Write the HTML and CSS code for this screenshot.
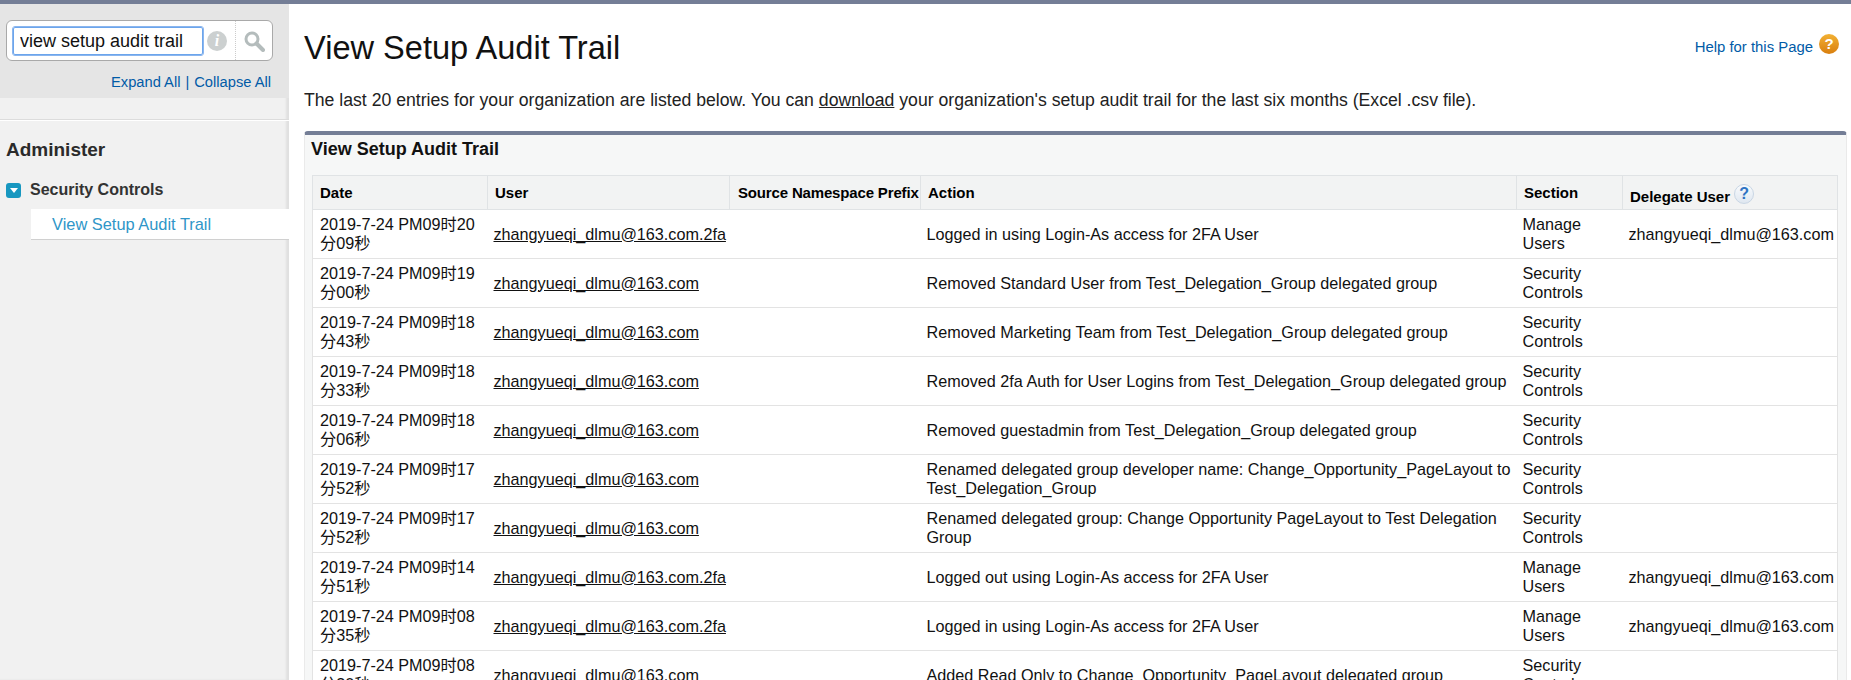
FILE: index.html
```html
<!DOCTYPE html>
<html lang="en">
<head>
    <meta charset="UTF-8">
    <title>View Setup Audit Trail</title>
    <link rel="stylesheet" href="styles.css">
</head>
<body>
    <div class="top-bar"></div>
    <div class="layout">
        <div class="sidebar">
            <div class="search-area">
                <div class="search-box">
                    <input class="search-input" type="text" value="view setup audit trail">
                    <span class="info-icon">i</span>
                    <span class="search-btn">
                        <svg width="22" height="22" viewBox="0 0 22 22"><circle cx="9" cy="9" r="6" fill="none" stroke="#b4bcbc" stroke-width="3"/><path d="M13.5 13.5L20 20" stroke="#b4bcbc" stroke-width="4" stroke-linecap="round"/></svg>
                    </span>
                </div>
                <div class="expand-links"><a href="#">Expand All</a><span class="pipe">|</span><a href="#">Collapse All</a></div>
            </div>
            <div class="side-spacer"></div>
            <h2 class="side-title">Administer</h2>
            <div class="side-group">
                <span class="toggle"><span class="toggle-arrow"></span></span>
                <span>Security Controls</span>
            </div>
            <div class="side-item"><a href="#">View Setup Audit Trail</a></div>
        </div>
        <div class="main">
            <div class="page-head">
                <h1>View Setup Audit Trail</h1>
                <a class="help-link" href="#">Help for this Page <span class="help-icon">?</span></a>
            </div>
            <p class="intro">The last 20 entries for your organization are listed below. You can <a href="#">download</a> your organization's setup audit trail for the last six months (Excel .csv file).</p>
            <div class="block">
                <h3>View Setup Audit Trail</h3>
                <table class="list">
                    <colgroup>
                        <col class="c-date"><col class="c-user"><col class="c-ns"><col class="c-action"><col class="c-section"><col class="c-delegate">
                    </colgroup>
                    <tr>
                        <th>Date</th><th>User</th><th class="th-ns">Source Namespace Prefix</th><th>Action</th><th>Section</th>
                        <th class="th-delegate">Delegate User <span class="q-icon">?</span></th>
                    </tr>
                    <tr>
                        <td>2019-7-24 PM09时20分09秒</td><td><a href="#">zhangyueqi_dlmu@163.com.2fa</a></td><td></td>
                        <td>Logged in using Login-As access for 2FA User</td><td>Manage Users</td><td>zhangyueqi_dlmu@163.com</td>
                    </tr>
                    <tr>
                        <td>2019-7-24 PM09时19分00秒</td><td><a href="#">zhangyueqi_dlmu@163.com</a></td><td></td>
                        <td>Removed Standard User from Test_Delegation_Group delegated group</td><td>Security Controls</td><td></td>
                    </tr>
                    <tr>
                        <td>2019-7-24 PM09时18分43秒</td><td><a href="#">zhangyueqi_dlmu@163.com</a></td><td></td>
                        <td>Removed Marketing Team from Test_Delegation_Group delegated group</td><td>Security Controls</td><td></td>
                    </tr>
                    <tr>
                        <td>2019-7-24 PM09时18分33秒</td><td><a href="#">zhangyueqi_dlmu@163.com</a></td><td></td>
                        <td>Removed 2fa Auth for User Logins from Test_Delegation_Group delegated group</td><td>Security Controls</td><td></td>
                    </tr>
                    <tr>
                        <td>2019-7-24 PM09时18分06秒</td><td><a href="#">zhangyueqi_dlmu@163.com</a></td><td></td>
                        <td>Removed guestadmin from Test_Delegation_Group delegated group</td><td>Security Controls</td><td></td>
                    </tr>
                    <tr>
                        <td>2019-7-24 PM09时17分52秒</td><td><a href="#">zhangyueqi_dlmu@163.com</a></td><td></td>
                        <td>Renamed delegated group developer name: Change_Opportunity_PageLayout to Test_Delegation_Group</td><td>Security Controls</td><td></td>
                    </tr>
                    <tr>
                        <td>2019-7-24 PM09时17分52秒</td><td><a href="#">zhangyueqi_dlmu@163.com</a></td><td></td>
                        <td>Renamed delegated group: Change Opportunity PageLayout to Test Delegation Group</td><td>Security Controls</td><td></td>
                    </tr>
                    <tr>
                        <td>2019-7-24 PM09时14分51秒</td><td><a href="#">zhangyueqi_dlmu@163.com.2fa</a></td><td></td>
                        <td>Logged out using Login-As access for 2FA User</td><td>Manage Users</td><td>zhangyueqi_dlmu@163.com</td>
                    </tr>
                    <tr>
                        <td>2019-7-24 PM09时08分35秒</td><td><a href="#">zhangyueqi_dlmu@163.com.2fa</a></td><td></td>
                        <td>Logged in using Login-As access for 2FA User</td><td>Manage Users</td><td>zhangyueqi_dlmu@163.com</td>
                    </tr>
                    <tr>
                        <td>2019-7-24 PM09时08分30秒</td><td><a href="#">zhangyueqi_dlmu@163.com</a></td><td></td>
                        <td>Added Read Only to Change_Opportunity_PageLayout delegated group</td><td>Security Controls</td><td></td>
                    </tr>
                </table>
            </div>
        </div>
    </div>
</body>
</html>
```
FILE: styles.css
```css
html, body {
    height: 100%;
    overflow: hidden;
}
body {
    margin: 0;
    font-family: "Liberation Sans", "Noto Sans CJK SC", Arial, sans-serif;
    font-size: 15px;
    color: #222;
    background: #fff;
}
a {
    color: #015ba7;
    text-decoration: none;
}
.top-bar {
    height: 4px;
    background: #747e96;
}
.layout {
    display: flex;
    height: 676px;
}

/* sidebar */
.sidebar {
    width: 289px;
    flex: none;
    background: #f1f1f1;
    box-shadow: inset -3px 0 2px #e0e0e0;
}
.search-area {
    height: 94px;
    background: #e5e5e5;
    padding: 16px 0 0 6px;
    box-sizing: border-box;
}
.search-box {
    display: flex;
    align-items: center;
    width: 267px;
    height: 41px;
    box-sizing: border-box;
    background: #fff;
    border: 1px solid #a9a9a9;
    border-radius: 6px;
    padding-left: 6px;
}
.search-input {
    width: 190px;
    height: 28px;
    box-sizing: border-box;
    border: 1px solid #6ca5ec;
    border-radius: 2px;
    outline: 1px solid #8ab6ef;
    padding: 1px 6px 0;
    font: 18px "Liberation Sans", Arial, sans-serif;
    color: #111;
}
.info-icon {
    width: 20px;
    height: 20px;
    margin-left: 4px;
    border-radius: 50%;
    background: #ccd0d0;
    color: #fff;
    font: italic bold 16px/20px "Liberation Serif", serif;
    text-align: center;
}
.search-btn {
    display: flex;
    align-items: center;
    justify-content: center;
    height: 100%;
    flex: 1;
    margin-left: 8px;
    border-left: 1px dotted #ccc;
}
.expand-links {
    margin-top: 13px;
    width: 267px;
    text-align: right;
    font-size: 14.7px;
    color: #015ba7;
    padding-right: 2px;
    box-sizing: border-box;
}
.pipe {
    margin: 0 5px;
}
.side-spacer {
    height: 21px;
    border-bottom: 1px solid #dcdcdc;
    box-shadow: 0 1px 0 #fff;
}
.side-title {
    margin: 19px 0 0 6px;
    font-size: 19px;
    line-height: 22px;
    color: #2b2b2b;
}
.side-group {
    display: flex;
    align-items: center;
    gap: 9px;
    margin: 20px 0 0 6px;
    font-size: 16px;
    font-weight: bold;
    color: #333;
}
.toggle {
    display: flex;
    align-items: center;
    justify-content: center;
    width: 15px;
    height: 15px;
    border-radius: 3px;
    background: #1797c0;
}
.toggle-arrow {
    width: 0;
    height: 0;
    border: 4px solid transparent;
    border-top: 5px solid #fff;
    border-bottom: 0;
}
.side-item {
    margin: 10px 0 0 31px;
    height: 30px;
    line-height: 30px;
    padding-left: 21px;
    background: #fff;
    border-bottom: 1px solid #d0d0d0;
    font-size: 16.4px;
}
.side-item a {
    color: #2f96c8;
}

/* main column */
.main {
    flex: 1;
    min-width: 0;
    padding: 0 4px 0 15px;
}
.page-head {
    display: flex;
    justify-content: space-between;
    height: 63px;
    align-items: flex-start;
    padding-top: 27px;
    box-sizing: border-box;
}
.page-head h1 {
    margin: 0;
    font-size: 32.6px;
    font-weight: normal;
    line-height: 34px;
    color: #111;
}
.help-link {
    display: flex;
    align-items: center;
    gap: 6px;
    margin: 3px 0 0;
    font-size: 14.9px;
    padding-right: 8px;
}
.help-icon {
    width: 20px;
    height: 20px;
    margin-bottom: 6px;
    border-radius: 50%;
    background: linear-gradient(#f2b134, #d97f0e);
    color: #fff;
    font-weight: bold;
    font-size: 15px;
    line-height: 20px;
    text-align: center;
}
.intro {
    margin: 23px 0 0;
    font-size: 17.65px;
    line-height: 20px;
    color: #222;
}
.intro a {
    color: #222;
    text-decoration: underline;
}
.block {
    margin-top: 21px;
    padding: 0 7px;
    background: #f6f7f7;
    border: 1px solid #eaeaea;
    border-top: 4px solid #747e96;
    border-radius: 4px 4px 0 0;
}
.block h3 {
    margin: 0 0 0 -1px;
    padding-top: 3px;
    height: 40px;
    box-sizing: border-box;
    font-size: 18px;
    line-height: 22px;
    color: #111;
}

/* table */
.list {
    table-layout: fixed;
    width: 1525px;
    border-collapse: collapse;
    background: #fff;
    border: 1px solid #e3e3e3;
}
.c-date { width: 175px; }
.c-user { width: 242px; }
.c-ns { width: 191px; }
.c-action { width: 596px; }
.c-section { width: 106px; }
.c-delegate { width: 215px; }
.list th {
    height: 34px;
    box-sizing: border-box;
    padding: 0 7px;
    background: #f2f3f3;
    border: 1px solid #e0e3e5;
    text-align: left;
    font-size: 15px;
    color: #000;
    white-space: nowrap;
}
.list .th-ns {
    padding-left: 8px;
    letter-spacing: -0.16px;
}
.list .th-delegate {
    padding-top: 3px;
}
.q-icon {
    display: inline-block;
    width: 20px;
    height: 20px;
    vertical-align: 3px;
    border-radius: 50%;
    background: linear-gradient(#f8fafc, #dfe7f0);
    border: 1px solid #c9d6e4;
    box-sizing: border-box;
    color: #2f74c4;
    font-size: 16px;
    line-height: 18px;
    text-align: center;
}
.list td {
    height: 49px;
    padding: 0 4px 0 6px;
    box-sizing: border-box;
    border-bottom: 1px solid #e3e3e3;
    font-size: 16.2px;
    line-height: 19px;
    color: #111;
}
.list td:first-child {
    padding-left: 7px;
}
.list td a {
    color: #111;
    text-decoration: underline;
}
```
